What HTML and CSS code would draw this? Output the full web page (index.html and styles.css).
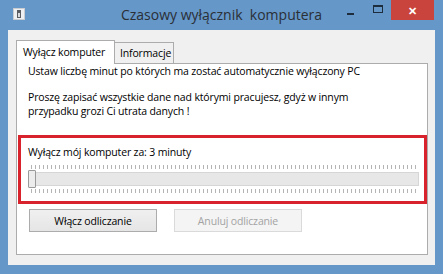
FILE: index.html
```html
<!DOCTYPE html>
<html lang="pl">
<head>
    <meta charset="UTF-8">
    <title>Czasowy wyłącznik komputera</title>
    <link rel="stylesheet" href="styles.css">
</head>
<body>
    <div class="window">
        <div class="titlebar">
            <div class="app-icon">
                <svg width="12" height="12" viewBox="0 0 12 12">
                    <rect x="0.5" y="0.5" width="11" height="11" fill="#eef0f2" stroke="#c9ccd0"/>
                    <rect x="4" y="2" width="4" height="8" fill="#5a5e63"/>
                    <rect x="5" y="5" width="2" height="4" fill="#d8dadc"/>
                </svg>
            </div>
            <div class="title">Czasowy wyłącznik  komputera</div>
            <div class="controls">
                <div class="ctrl minimize"><span></span></div>
                <div class="ctrl maximize"><span></span></div>
                <div class="ctrl close">&#x2715;</div>
            </div>
        </div>

        <div class="client">
            <div class="tabs">
                <div class="tab active">Wyłącz komputer</div>
                <div class="tab">Informacje</div>
            </div>
            <div class="panel">
                <div class="intro">
                    <p class="first">Ustaw liczbę minut po których ma zostać automatycznie wyłączony PC</p>
                    <p>Proszę zapisać wszystkie dane nad którymi pracujesz, gdyż w innym<br>przypadku grozi Ci utrata danych !</p>
                </div>

                <div class="timer-box">
                    <div class="timer-label">Wyłącz mój komputer za: 3 minuty</div>
                    <div class="slider">
                        <div class="ticks"></div>
                        <div class="track">
                            <div class="thumb"></div>
                        </div>
                        <div class="ticks"></div>
                    </div>
                </div>

                <div class="buttons">
                    <button class="btn">Włącz odliczanie</button>
                    <button class="btn" disabled>Anuluj odliczanie</button>
                </div>
            </div>
        </div>
    </div>
</body>
</html>
```

FILE: styles.css
```css
* {
    margin: 0;
    padding: 0;
    box-sizing: border-box;
}

body {
    background-color: #6597c9;
    font-family: 'Open Sans', 'Noto Sans', sans-serif;
    font-size: 10.5px;
    letter-spacing: -0.15px;
    color: #000;
}

.window {
    width: 443px;
    height: 274px;
    background-color: #6597c9;
    display: flex;
    flex-direction: column;
}

/* title bar */
.titlebar {
    height: 30px;
    display: grid;
    grid-template-columns: 1fr auto 1fr;
    align-items: start;
}

.app-icon {
    padding: 8px 0 0 13px;
    height: 20px;
}

.title {
    white-space: pre;
    font-size: 14px;
    letter-spacing: 0;
    line-height: 30px;
    color: #2a2f36;
}

.controls {
    display: flex;
    justify-content: flex-end;
    padding-right: 9px;
}

.ctrl {
    height: 20px;
    width: 27px;
    display: flex;
    justify-content: center;
    align-items: center;
}

.minimize span {
    display: block;
    width: 7px;
    height: 2px;
    margin-top: 7px;
    background-color: #1d2d3e;
}

.maximize span {
    display: block;
    width: 10px;
    height: 8px;
    margin-bottom: 3px;
    border: 1px solid #1d2d3e;
    border-top-width: 2px;
}

.close {
    width: 43px;
    background-color: #c9443c;
    color: #fff;
    font-size: 11px;
    font-weight: bold;
}

/* client area */
.client {
    flex: 1;
    margin: 0 8px 9px 8px;
    background-color: #f0f0f0;
    padding: 10px 7px 10px 8px;
    display: flex;
    flex-direction: column;
}

.tabs {
    display: flex;
    align-items: flex-end;
    height: 23px;
    position: relative;
    z-index: 1;
}

.tab {
    height: 21px;
    width: 60px;
    padding-left: 5px;
    white-space: nowrap;
    line-height: 21px;
    border: 1px solid #acacac;
    border-bottom: none;
    background-color: #f0f0f0;
}

.tab.active {
    height: 24px;
    width: 99px;
    margin-bottom: -1px;
    padding-left: 6px;
    line-height: 22px;
    background-color: #fff;
}

.tab + .tab {
    margin-left: -1px;
}

.panel {
    flex: 1;
    background-color: #fff;
    border: 1px solid #acacac;
}

.intro {
    padding-left: 11px;
    line-height: 14px;
}

.intro .first {
    margin-bottom: 12px;
}

.timer-box {
    width: 409px;
    height: 69px;
    margin: 17px 0 0 1px;
    border: 3px solid #d8232d;
    padding: 7px 5px 0 7px;
}

.timer-label {
    line-height: 14px;
}

.slider {
    width: 391px;
    margin-top: 6px;
}

.ticks {
    height: 4px;
    margin: 0 3px;
    background-image: repeating-linear-gradient(to right, #b4b4b4 0, #b4b4b4 1px, transparent 1px, transparent 4px);
}

.track {
    height: 14px;
    margin: 3px 0;
    background-color: #e7e7e7;
    border: 1px solid #d6d6d6;
    position: relative;
}

.thumb {
    position: absolute;
    left: -1px;
    top: -3px;
    width: 8px;
    height: 18px;
    background-color: #ececec;
    border: 1px solid #9a9a9a;
    border-radius: 1px;
}

.buttons {
    display: flex;
    gap: 17px;
    margin: 5px 0 0 12px;
}

.btn {
    width: 128px;
    height: 23px;
    font-family: inherit;
    font-size: 10.5px;
    letter-spacing: -0.15px;
    color: #000;
    background: linear-gradient(#f0f0f0, #e5e5e5);
    border: 1px solid #acacac;
}

.btn:disabled {
    color: #a3a3a3;
    background: #f4f4f4;
    border-color: #dadada;
}
```
